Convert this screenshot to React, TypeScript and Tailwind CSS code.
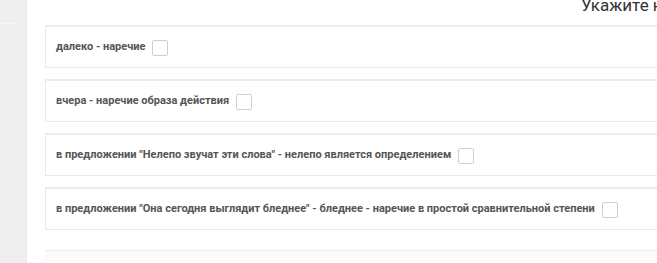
import React from 'react';

const options = [
  'далеко - наречие',
  'вчера - наречие образа действия',
  'в предложении "Нелепо звучат эти слова" - нелепо является определением',
  'в предложении "Она сегодня выглядит бледнее" - бледнее - наречие в простой сравнительной степени',
];

const App: React.FC = () => {
  return (
    <div className="flex h-[263px] w-[657px] overflow-hidden bg-white" style={{ fontFamily: 'Roboto, "Liberation Sans", sans-serif' }}>
      <div className="w-[27px] shrink-0 border-r border-[#e6e6e6] bg-[#efefef]">
        <div className="mt-[23px] h-px w-[16px] bg-[#f7f7f7]" />
      </div>
      <div className="flex w-[760px] shrink-0 flex-col pl-[18px]">
        <div className="-mt-[2px] h-[25px] whitespace-nowrap pl-[536px] text-[17px] leading-[14px] text-[#333]">Укажите неверные утверждения</div>
        <div className="flex flex-col gap-[11px] pt-[2px]">
          {options.map((text) => (
            <div key={text} className="flex h-[43px] items-center border border-t-2 border-[#e9e9e9] border-t-[#ececec] pl-[10px]">
              <span className="text-[11px] font-bold text-[#555]">{text}</span>
              <span className="ml-[7px] mt-[2px] h-[16px] w-[16px] rounded-[2px] border border-[#cfcfcf] bg-white" />
            </div>
          ))}
        </div>
        <div className="mt-[20px] h-px bg-[#ececec]" />
        <div className="h-[10px] bg-[#fdfafa]" />
      </div>
    </div>
  );
};

export default App;
